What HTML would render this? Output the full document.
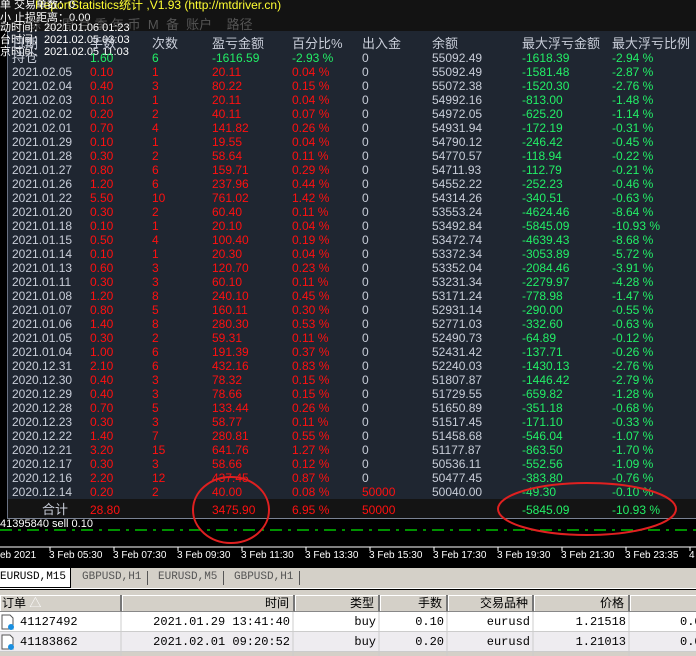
<!DOCTYPE html>
<html><head><meta charset="utf-8"><style>
*{margin:0;padding:0;box-sizing:border-box}
body{width:696px;height:656px;overflow:hidden;background:#000;position:relative;font-family:"Liberation Sans","Noto Sans CJK SC",sans-serif;font-size:12px}
.a{position:absolute;white-space:nowrap}
#top{position:absolute;left:0;top:0;width:696px;height:31px;background:#131313}
#panel{position:absolute;left:7px;top:31px;width:689px;height:488px;background:#1f2631;border-left:1px solid #6a7283;border-bottom:1px solid #7a8293}
#tot{position:absolute;left:8px;top:499px;width:688px;height:19px;background:#141414}
.r{position:absolute;left:0;width:696px;height:14px;line-height:14px;font-size:12px}
.r span{position:absolute}
.c0{left:12px;color:#c8cdd8}.c1{left:90px}.c2{left:152px}.c3{left:212px}.c4{left:292px}.c5{left:362px;color:#c8cdd8}.c6{left:432px;color:#c8cdd8}.c7{left:522px;color:#22ee66}.c8{left:612px;color:#22ee66}
.red{color:#ff1010}
.hd span{color:#c8cdd8;font-size:13px}
.ov{color:#fff;font-size:11px}
#tabs{position:absolute;left:0;top:568px;width:696px;height:21px;background:#d4d0c8;border-bottom:1px solid #fff}
.tab{position:absolute;top:2px;font-family:"Liberation Mono","Noto Sans CJK SC",monospace;font-size:11px;color:#555}
#grid{position:absolute;left:0;top:590px;width:696px;height:66px;background:#d4d0c8}
.th{position:absolute;top:5px;height:17px;background:#d4d0c8;border-right:2px solid #777;border-bottom:1px solid #888;font-size:12px;line-height:16px;text-align:right;padding-right:4px;color:#000;box-shadow:inset 1px 1px #fff}
.tr{position:absolute;left:0;width:696px;height:20px;font-family:"Liberation Mono",monospace;font-size:12px;line-height:20px;border-bottom:1px solid #ccc}
.tr span{position:absolute;text-align:right}
.ax span{position:absolute}
</style></head><body>
<div id="top"></div>
<div id="panel"></div>
<div id="tot"></div>

<div class="a" style="left:35px;top:-4px;color:#ffff33;font-size:12px">ReportStatistics统计 ,V1.93 (http://mtdriver.cn)</div>
<div class="a ov" style="left:0;top:-4px">单 交易单数：0</div>
<div class="a ov" style="left:0;top:9px">小 止损距离：0.00</div>
<div class="a" style="left:28px;top:14px;color:#555;font-size:13px;letter-spacing:0">综 日 周 月 季 年 币 &nbsp;M &nbsp;备 &nbsp;账户 &nbsp;&nbsp;&nbsp;路径</div>
<div class="a ov" style="left:0;top:19px">动时间：2021.01.06 01:23</div>
<div class="a ov" style="left:0;top:31px">台时间：2021.02.05 03:03</div>
<div class="a ov" style="left:0;top:43px">京时间：2021.02.05 11:03</div>

<div class="r hd" style="top:37px"><span class="c0">日期</span><span style="left:90px">手数</span><span style="left:152px">次数</span><span style="left:212px">盈亏金额</span><span style="left:292px">百分比%</span><span style="left:362px">出入金</span><span style="left:432px">余额</span><span style="left:522px">最大浮亏金额</span><span style="left:612px">最大浮亏比例</span></div>
<div class="r" style="top:51px"><span class="c0" style="font-size:13px">持仓</span><span class="c1" style="color:#22ee66">1.60</span><span class="c2" style="color:#22ee66">6</span><span class="c3" style="color:#22ee66">-1616.59</span><span class="c4" style="color:#22ee66">-2.93 %</span><span class="c5">0</span><span class="c6">55092.49</span><span class="c7">-1618.39</span><span class="c8">-2.94 %</span></div>
<div id="rows"></div>

<div class="r" style="top:502px;height:16px;line-height:16px"><span style="left:42px;color:#c8cdd8;font-size:13px">合计</span><span class="c1 red">28.80</span><span class="c3 red">3475.90</span><span class="c4 red">6.95 %</span><span class="c5 red">50000</span><span class="c7">-5845.09</span><span class="c8">-10.93 %</span></div>

<div class="a" style="left:0;top:518px;color:#fff;font-size:11px">41395840 sell 0.10</div>
<svg class="a" style="left:0;top:0" width="696" height="567">
<line x1="0" y1="530" x2="696" y2="530" stroke="#00c000" stroke-width="1.5" stroke-dasharray="12,6,3,6"/>
<line x1="0" y1="547" x2="696" y2="547" stroke="#fff" stroke-width="1"/>
<g stroke="#fff"><line x1="50" y1="547" x2="50" y2="551"/><line x1="114" y1="547" x2="114" y2="551"/><line x1="178" y1="547" x2="178" y2="551"/><line x1="242" y1="547" x2="242" y2="551"/><line x1="306" y1="547" x2="306" y2="551"/><line x1="370" y1="547" x2="370" y2="551"/><line x1="434" y1="547" x2="434" y2="551"/><line x1="498" y1="547" x2="498" y2="551"/><line x1="562" y1="547" x2="562" y2="551"/><line x1="626" y1="547" x2="626" y2="551"/><line x1="690" y1="547" x2="690" y2="551"/></g>
<ellipse cx="231" cy="510" rx="38" ry="33" fill="none" stroke="#e02020" stroke-width="2"/>
<ellipse cx="587" cy="509" rx="89" ry="26" fill="none" stroke="#e02020" stroke-width="2"/>
</svg>
<div class="a ax" style="left:0;top:550px;color:#fff;font-size:10px;width:696px;height:14px">
<span style="left:0">eb 2021</span><span style="left:49px">3 Feb 05:30</span><span style="left:113px">3 Feb 07:30</span><span style="left:177px">3 Feb 09:30</span><span style="left:241px">3 Feb 11:30</span><span style="left:305px">3 Feb 13:30</span><span style="left:369px">3 Feb 15:30</span><span style="left:433px">3 Feb 17:30</span><span style="left:497px">3 Feb 19:30</span><span style="left:561px">3 Feb 21:30</span><span style="left:625px">3 Feb 23:35</span><span style="left:689px">4</span></div>

<div id="tabs">
<div class="a" style="left:0;top:0;width:71px;height:20px;background:#fff;border-right:1px solid #000;border-bottom:1px solid #000"></div>
<div class="tab" style="left:0;top:3px;color:#000">EURUSD,M15</div>
<div class="tab" style="left:82px;top:3px">GBPUSD,H1</div>
<div class="a" style="left:147px;top:3px;width:1px;height:14px;background:#555"></div>
<div class="tab" style="left:158px;top:3px">EURUSD,M5</div>
<div class="a" style="left:223px;top:3px;width:1px;height:14px;background:#555"></div>
<div class="tab" style="left:234px;top:3px">GBPUSD,H1</div>
<div class="a" style="left:299px;top:3px;width:1px;height:14px;background:#555"></div>
</div>
<div id="grid">
<div class="th" style="left:0;width:122px;text-align:left;padding-left:2px">订单 <span style="color:#fff">△</span></div>
<div class="th" style="left:122px;width:173px">时间</div>
<div class="th" style="left:295px;width:85px">类型</div>
<div class="th" style="left:380px;width:68px">手数</div>
<div class="th" style="left:448px;width:86px">交易品种</div>
<div class="th" style="left:534px;width:96px">价格</div>
<div class="th" style="left:630px;width:70px"></div>
<div class="tr" style="top:22px;background:#fff"><span style="left:20px;text-align:left">41127492</span><span style="left:150px;width:140px">2021.01.29 13:41:40</span><span style="left:300px;width:76px">buy</span><span style="left:384px;width:60px">0.10</span><span style="left:452px;width:78px">eurusd</span><span style="left:540px;width:86px">1.21518</span><span style="left:680px;text-align:left">0.0</span></div>
<div class="tr" style="top:42px;background:#eeecf0"><span style="left:20px;text-align:left">41183862</span><span style="left:150px;width:140px">2021.02.01 09:20:52</span><span style="left:300px;width:76px">buy</span><span style="left:384px;width:60px">0.20</span><span style="left:452px;width:78px">eurusd</span><span style="left:540px;width:86px">1.21013</span><span style="left:680px;text-align:left">0.0</span></div>
<svg class="a" style="left:0;top:22px" width="696" height="44"><g stroke="#ccc"><line x1="121" y1="0" x2="121" y2="44"/><line x1="293" y1="0" x2="293" y2="44"/><line x1="379" y1="0" x2="379" y2="44"/><line x1="447" y1="0" x2="447" y2="44"/><line x1="533" y1="0" x2="533" y2="44"/><line x1="629" y1="0" x2="629" y2="44"/></g>
<g><path d="M2 3h8l3 3v11h-11z" fill="#fff" stroke="#555"/><circle cx="11" cy="15" r="3" fill="#1a8fe0"/><path d="M2 23h8l3 3v11h-11z" fill="#fff" stroke="#555"/><circle cx="11" cy="35" r="3" fill="#1a8fe0"/></g></svg>
</div>

<script>
var d=[
["2021.02.05","0.10","1","20.11","0.04 %","0","55092.49","-1581.48","-2.87 %"],
["2021.02.04","0.40","3","80.22","0.15 %","0","55072.38","-1520.30","-2.76 %"],
["2021.02.03","0.10","1","20.11","0.04 %","0","54992.16","-813.00","-1.48 %"],
["2021.02.02","0.20","2","40.11","0.07 %","0","54972.05","-625.20","-1.14 %"],
["2021.02.01","0.70","4","141.82","0.26 %","0","54931.94","-172.19","-0.31 %"],
["2021.01.29","0.10","1","19.55","0.04 %","0","54790.12","-246.42","-0.45 %"],
["2021.01.28","0.30","2","58.64","0.11 %","0","54770.57","-118.94","-0.22 %"],
["2021.01.27","0.80","6","159.71","0.29 %","0","54711.93","-112.79","-0.21 %"],
["2021.01.26","1.20","6","237.96","0.44 %","0","54552.22","-252.23","-0.46 %"],
["2021.01.22","5.50","10","761.02","1.42 %","0","54314.26","-340.51","-0.63 %"],
["2021.01.20","0.30","2","60.40","0.11 %","0","53553.24","-4624.46","-8.64 %"],
["2021.01.18","0.10","1","20.10","0.04 %","0","53492.84","-5845.09","-10.93 %"],
["2021.01.15","0.50","4","100.40","0.19 %","0","53472.74","-4639.43","-8.68 %"],
["2021.01.14","0.10","1","20.30","0.04 %","0","53372.34","-3053.89","-5.72 %"],
["2021.01.13","0.60","3","120.70","0.23 %","0","53352.04","-2084.46","-3.91 %"],
["2021.01.11","0.30","3","60.10","0.11 %","0","53231.34","-2279.97","-4.28 %"],
["2021.01.08","1.20","8","240.10","0.45 %","0","53171.24","-778.98","-1.47 %"],
["2021.01.07","0.80","5","160.11","0.30 %","0","52931.14","-290.00","-0.55 %"],
["2021.01.06","1.40","8","280.30","0.53 %","0","52771.03","-332.60","-0.63 %"],
["2021.01.05","0.30","2","59.31","0.11 %","0","52490.73","-64.89","-0.12 %"],
["2021.01.04","1.00","6","191.39","0.37 %","0","52431.42","-137.71","-0.26 %"],
["2020.12.31","2.10","6","432.16","0.83 %","0","52240.03","-1430.13","-2.76 %"],
["2020.12.30","0.40","3","78.32","0.15 %","0","51807.87","-1446.42","-2.79 %"],
["2020.12.29","0.40","3","78.66","0.15 %","0","51729.55","-659.82","-1.28 %"],
["2020.12.28","0.70","5","133.44","0.26 %","0","51650.89","-351.18","-0.68 %"],
["2020.12.23","0.30","3","58.77","0.11 %","0","51517.45","-171.10","-0.33 %"],
["2020.12.22","1.40","7","280.81","0.55 %","0","51458.68","-546.04","-1.07 %"],
["2020.12.21","3.20","15","641.76","1.27 %","0","51177.87","-863.50","-1.70 %"],
["2020.12.17","0.30","3","58.66","0.12 %","0","50536.11","-552.56","-1.09 %"],
["2020.12.16","2.20","12","437.45","0.87 %","0","50477.45","-383.80","-0.76 %"],
["2020.12.14","0.20","2","40.00","0.08 %","50000","50040.00","-49.30","-0.10 %"]];
var h="";
d.forEach(function(r,i){h+='<div class="r" style="top:'+(65+i*14)+'px">';
r.forEach(function(v,j){var c="c"+j+((j>=1&&j<=4)||(j==5&&v!="0")?" red":"");h+='<span class="'+c+'">'+v+'</span>';});h+='</div>';});
document.getElementById("rows").innerHTML=h;
</script>
</body></html>
